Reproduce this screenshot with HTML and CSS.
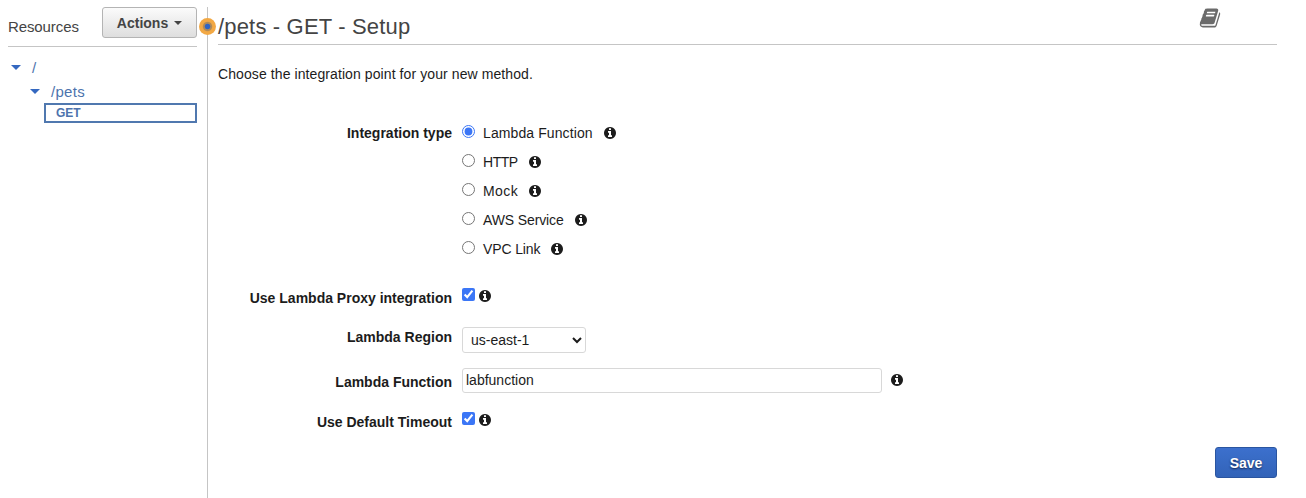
FILE: index.html
```html
<!DOCTYPE html>
<html lang="en">
<head>
<meta charset="utf-8">
<title>/pets - GET - Setup</title>
<link rel="stylesheet" href="styles.css">
</head>
<body>
<svg width="0" height="0" class="defs">
  <symbol id="info" viewBox="0 0 1792 1792"><path d="M1152 1376v-160q0-14-9-23t-23-9h-96v-512q0-14-9-23t-23-9h-320q-14 0-23 9t-9 23v160q0 14 9 23t23 9h96v320h-96q-14 0-23 9t-9 23v160q0 14 9 23t23 9h448q14 0 23-9t9-23zm-128-896v-160q0-14-9-23t-23-9h-192q-14 0-23 9t-9 23v160q0 14 9 23t23 9h192q14 0 23-9t9-23zm640 416q0 209-103 385.5t-279.5 279.5-385.5 103-385.5-103-279.5-279.5-103-385.5 103-385.5 279.5-279.5 385.5-103 385.5 103 279.5 279.5 103 385.5z"/></symbol>
</svg>
<div class="layout">
  <aside class="sidebar">
    <div class="side-head">
      <span class="side-title">Resources</span>
      <button class="actions" type="button">Actions<span class="caret"></span></button>
    </div>
    <nav class="tree">
      <div class="node"><span class="arrow"></span><a>/</a></div>
      <div class="node child"><span class="arrow"></span><a>/pets</a></div>
      <div class="method">GET</div>
    </nav>
  </aside>
  <main class="main">
    <span class="beacon"></span>
    <header class="head">
      <h1>/pets - GET - Setup</h1>
      <svg class="book" viewBox="0 0 1792 1792"><path d="M1703 478q40 57 18 129l-275 906q-19 64-76.5 107.5t-122.5 43.5h-923q-77 0-148.5-53.5t-99.5-131.5q-24-67-2-127 0-4 3-27t4-37q1-8-3-21.5t-3-19.5q2-11 8-21t16.5-23.5 16.5-23.5q23-38 45-91.5t30-91.5q3-10 .5-30t-.5-28q3-11 17-28t17-23q21-36 42-92t25-90q1-9-2.5-32t.5-28q4-13 22-30.5t22-22.5q19-26 42.5-84.5t27.5-96.5q1-8-3-25.5t-2-26.5q2-8 9-18t18-23 17-21q8-12 16.5-30.5t15-35 16-36 19.5-32 26.5-23.5 36-11.5 47.5 5.5l-1 3q38-9 51-9h761q74 0 114 56t18 130l-274 906q-36 119-71.5 153.5t-128.5 34.5h-869q-27 0-38 15-11 16-1 43 24 70 144 70h923q29 0 56-15.5t35-41.5l300-987q7-22 5-57 38 15 59 43zm-1064 2q-4 13 2 22.5t20 9.5h608q13 0 25.5-9.5t16.5-22.5l21-64q4-13-2-22.5t-20-9.5h-608q-13 0-25.5 9.5t-16.5 22.5zm-83 256q-4 13 2 22.5t20 9.5h608q13 0 25.5-9.5t16.5-22.5l21-64q4-13-2-22.5t-20-9.5h-608q-13 0-25.5 9.5t-16.5 22.5z"/></svg>
    </header>
    <p class="intro">Choose the integration point for your new method.</p>
    <form class="form">
      <div class="row types">
        <span class="label">Integration type</span>
        <div class="options">
          <label class="option lambda"><input type="radio" name="type" checked><span>Lambda Function</span><svg class="info"><use href="#info"/></svg></label>
          <label class="option http"><input type="radio" name="type"><span>HTTP</span><svg class="info"><use href="#info"/></svg></label>
          <label class="option mock"><input type="radio" name="type"><span>Mock</span><svg class="info"><use href="#info"/></svg></label>
          <label class="option aws"><input type="radio" name="type"><span>AWS Service</span><svg class="info"><use href="#info"/></svg></label>
          <label class="option vpc"><input type="radio" name="type"><span>VPC Link</span><svg class="info"><use href="#info"/></svg></label>
        </div>
      </div>
      <div class="row proxy">
        <span class="label">Use Lambda Proxy integration</span>
        <div class="check"><input type="checkbox" checked><svg class="info"><use href="#info"/></svg></div>
      </div>
      <div class="row region">
        <span class="label">Lambda Region</span>
        <select class="select"><option>us-east-1</option></select>
      </div>
      <div class="row function">
        <span class="label">Lambda Function</span>
        <div class="field"><input class="text" type="text" value="labfunction"><svg class="info"><use href="#info"/></svg></div>
      </div>
      <div class="row timeout">
        <span class="label">Use Default Timeout</span>
        <div class="check"><input type="checkbox" checked><svg class="info"><use href="#info"/></svg></div>
      </div>
      <button class="save" type="button">Save</button>
    </form>
  </main>
</div>
</body>
</html>
```
FILE: styles.css
```css
* { box-sizing: border-box; }
body {
  margin: 0;
  height: 498px;
  overflow: hidden;
  background: #fff;
  color: #1c1c1c;
  font: 14px/20px "Liberation Sans", Arial, sans-serif;
}
.defs { display: none; }
.layout { display: flex; height: 498px; padding-top: 7px; }

.sidebar { width: 207px; padding: 0 10px 0 8px; }
.side-head {
  display: flex;
  justify-content: space-between;
  height: 40px;
  border-bottom: 1px solid #c5c5c5;
}
.side-title { padding-top: 10px; font-size: 15px; letter-spacing: -0.1px; color: #444; }
.actions {
  display: flex;
  align-items: center;
  justify-content: center;
  gap: 6px;
  width: 95px;
  height: 31px;
  padding: 0;
  border: 1px solid #b4b4b4;
  border-radius: 3px;
  background: linear-gradient(#fbfbfb, #dedede);
  color: #444;
  font: bold 14px/20px "Liberation Sans", Arial, sans-serif;
}
.caret { margin-top: 1px; border: 4px solid transparent; border-top-color: #444; border-bottom: 0; }
.tree { padding-top: 9px; color: #4d73ad; font-size: 15px; }
.node { display: flex; align-items: center; gap: 11px; height: 24px; padding-left: 3px; }
.child { padding-left: 22px; letter-spacing: 0.3px; }
.arrow { margin-bottom: 1px; border: 5px solid transparent; border-top-color: #3468c0; border-bottom: 0; }
.method {
  height: 20px;
  margin: -1px 0 0 36px;
  padding-left: 10px;
  border: 2px solid #5078af;
  font-size: 12px;
  font-weight: bold;
  line-height: 16px;
}

.main {
  position: relative;
  flex: 1;
  padding: 0 29px 0 10px;
  border-left: 1px solid #c5c5c5;
}
.beacon {
  position: absolute;
  left: -9px;
  top: 11px;
  width: 17px;
  height: 17px;
  border-radius: 50%;
  background: radial-gradient(circle, #2f64c4 0 2.4px, #b08a58 3.2px 4.2px, #f2a844 5.2px);
}
.head {
  display: flex;
  justify-content: space-between;
  height: 38px;
  border-bottom: 1px solid #c5c5c5;
}
h1 {
  margin: 0;
  padding-top: 5px;
  font-size: 22px;
  line-height: 30px;
  font-weight: normal;
  letter-spacing: 0.17px;
  color: #444;
}
.book { width: 22px; height: 22px; margin-right: 56px; fill: #6b6b6b; }
.intro { margin: 19px 0 34px; letter-spacing: 0.09px; }

.row { display: grid; grid-template-columns: 234px 1fr; column-gap: 10px; }
.label { text-align: right; font-weight: bold; }
.types { height: 170px; }
.types .label { padding-top: 5px; }
.option { display: flex; align-items: center; height: 29px; }
.option span { margin: 1px 11px 0 8px; }
.lambda { letter-spacing: 0.1px; }
.http { letter-spacing: -0.45px; }
.mock { letter-spacing: 0.4px; }
.aws { letter-spacing: -0.12px; }
.vpc { letter-spacing: -0.12px; }
input[type="radio"], input[type="checkbox"] { width: 13px; height: 13px; margin: 0; accent-color: #3b76f6; }
.option input { position: relative; top: -1px; }
.info { width: 14px; height: 14px; fill: #1c1c1c; flex: none; }
.option .info { margin-top: 1px; margin-left: -1px; }
.check { display: flex; gap: 3px; }
.check .info { margin-top: 1px; }
.proxy { height: 39px; }
.region { height: 41px; }
.select {
  width: 124px;
  height: 26px;
  padding: 0 0 0 4px;
  border: 1px solid #d8d8d8;
  border-radius: 3px;
  background: #fff;
  color: #1c1c1c;
  font: 14px "Liberation Sans", Arial, sans-serif;
}
.function { height: 44px; }
.function .label { padding-top: 4px; }
.field { display: flex; gap: 8px; }
.text {
  width: 420px;
  height: 25px;
  padding: 0 3px 2px;
  border: 1px solid #d8d8d8;
  border-radius: 3px;
  color: #1c1c1c;
  font: 14px "Liberation Sans", Arial, sans-serif;
}
.field .info { margin-top: 5px; }
.timeout { height: 35px; }
.save {
  display: block;
  width: 62px;
  height: 31px;
  margin: 0 0 0 auto;
  padding: 0;
  border: 1px solid #2a55a0;
  border-radius: 3px;
  background: linear-gradient(#3c70cd, #3263b8);
  color: #fff;
  font: bold 14px "Liberation Sans", Arial, sans-serif;
  text-shadow: 0 1px 2px #12264c;
}
```
